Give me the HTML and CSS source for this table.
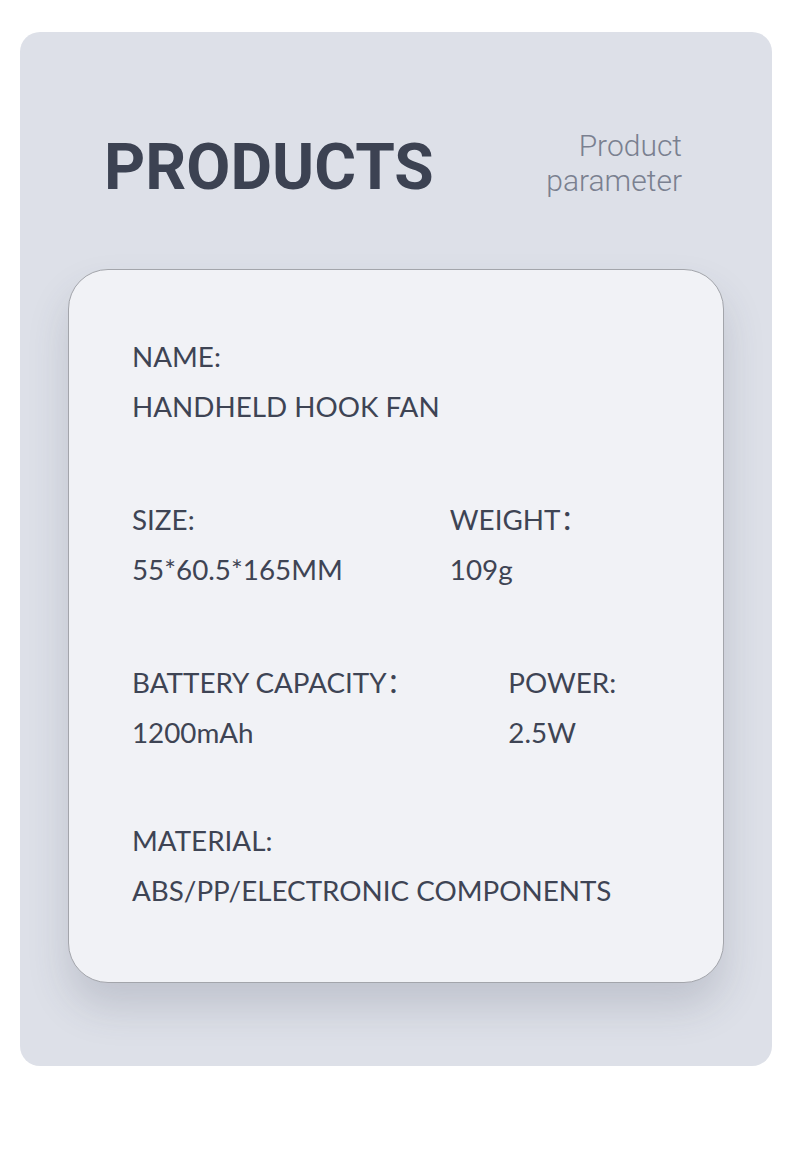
FILE: index.html
```html
<!DOCTYPE html>
<html lang="en">
<head>
    <meta charset="UTF-8">
    <meta name="viewport" content="width=device-width, initial-scale=1.0">
    <title>Products - Product parameter</title>
    <link rel="stylesheet" href="styles.css">
</head>
<body>
    <div class="panel">
        <header class="heading">
            <h1>PRODUCTS</h1>
            <p class="subtitle"><span>Product</span><span>parameter</span></p>
        </header>

        <div class="card">
            <div class="row">
                <div class="item">
                    <p class="label">NAME:</p>
                    <p class="value">HANDHELD HOOK FAN</p>
                </div>
            </div>
            <div class="row row-size">
                <div class="item">
                    <p class="label">SIZE:</p>
                    <p class="value">55*60.5*165MM</p>
                </div>
                <div class="item">
                    <p class="label">WEIGHT：</p>
                    <p class="value">109g</p>
                </div>
            </div>
            <div class="row row-battery">
                <div class="item">
                    <p class="label">BATTERY CAPACITY：</p>
                    <p class="value">1200mAh</p>
                </div>
                <div class="item">
                    <p class="label">POWER:</p>
                    <p class="value">2.5W</p>
                </div>
            </div>
            <div class="row">
                <div class="item">
                    <p class="label">MATERIAL:</p>
                    <p class="value">ABS/PP/ELECTRONIC COMPONENTS</p>
                </div>
            </div>
        </div>
    </div>
</body>
</html>
```

FILE: styles.css
```css
body {
    margin: 0;
    background-color: #ffffff;
    font-family: Lato, "Noto Sans CJK SC", sans-serif;
    color: #3e4454;
}
.panel {
    width: 752px;
    height: 1034px;
    margin: 32px 0 0 20px;
    background-color: #dde0e8;
    border-radius: 20px;
    box-sizing: border-box;
    padding-top: 98px;
}
.heading {
    display: flex;
    justify-content: space-between;
    align-items: flex-start;
    height: 72px;
    padding: 0 90px 0 84px;
}
.heading h1 {
    margin: 6px 0 0;
    font-family: Roboto, sans-serif;
    font-weight: 700;
    font-size: 64px;
    line-height: 1;
    color: #3c4252;
}
.subtitle {
    display: flex;
    flex-direction: column;
    align-items: flex-end;
    margin: -2px 0 0;
    font-family: Roboto, sans-serif;
    font-weight: 300;
    font-size: 30px;
    color: #7a8090;
}
.subtitle span {
    display: block;
    height: 35px;
    line-height: 35px;
}
.card {
    width: 656px;
    height: 714px;
    margin: 67px 0 0 48px;
    box-sizing: border-box;
    padding: 62px 30px 0 63px;
    background-color: #f1f2f6;
    border: 1.5px solid #a3a5ab;
    border-radius: 40px;
    box-shadow: 0 24px 40px rgba(60, 66, 90, 0.18);
}
.row {
    display: flex;
    gap: 110px;
    margin-bottom: 63px;
}
.row-size {
    gap: 107px;
}
.row-battery {
    gap: 94px;
    margin-bottom: 58px;
}
.label, .value {
    margin: 0;
    font-size: 27.8px;
    line-height: 50px;
}
```
